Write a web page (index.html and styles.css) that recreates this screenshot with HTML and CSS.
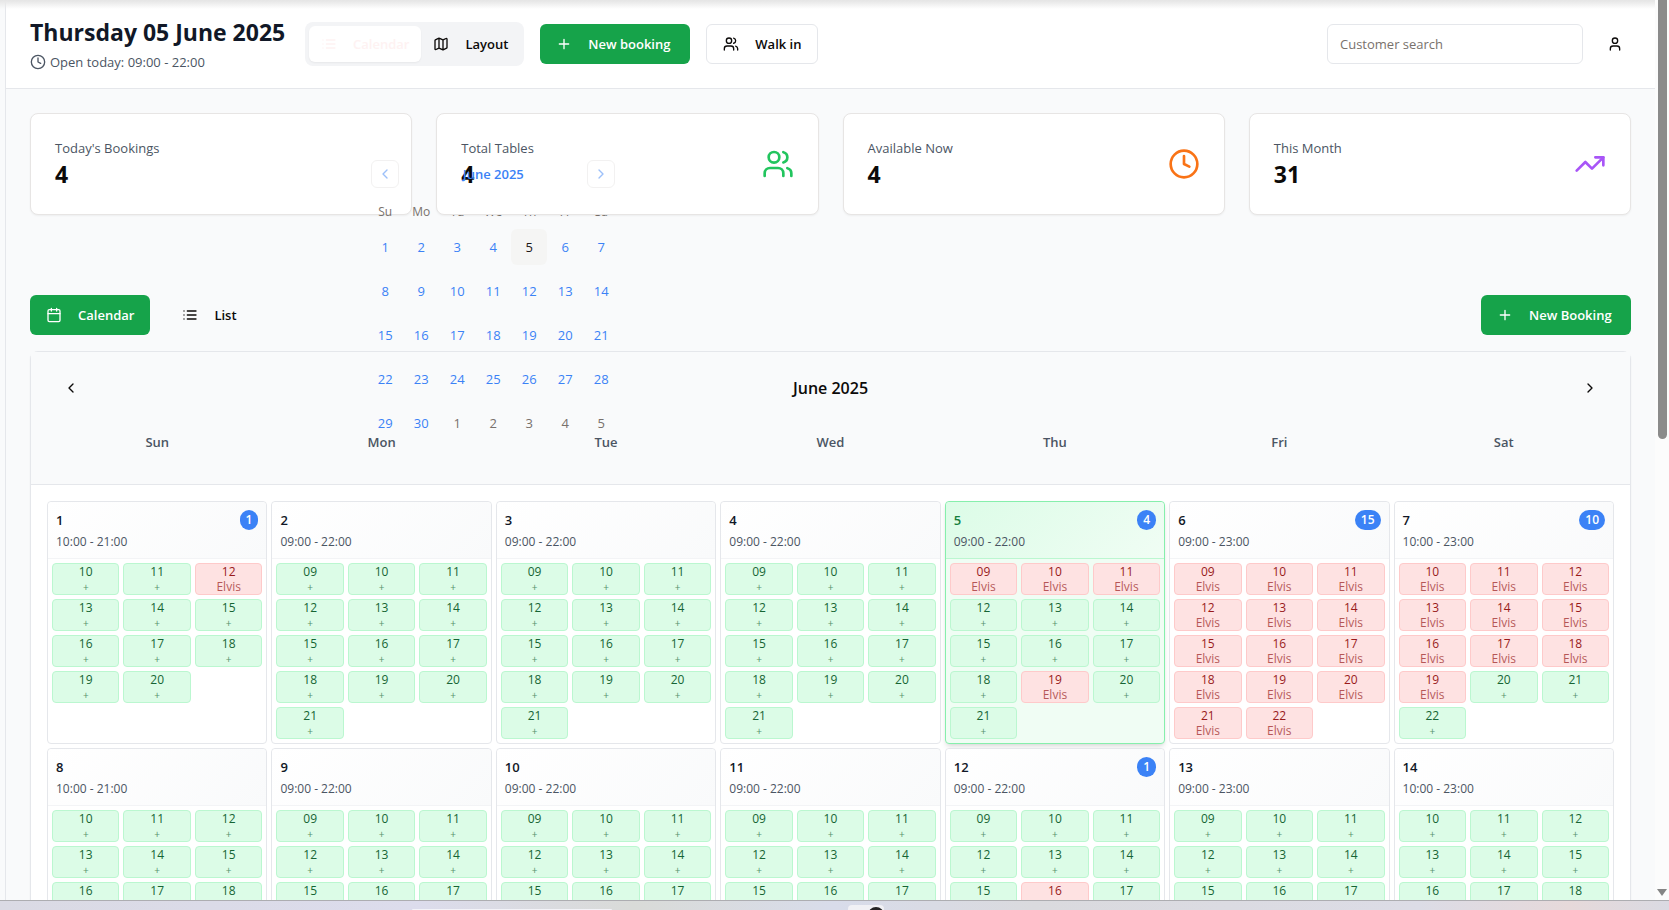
FILE: index.html
```html
<!DOCTYPE html>
<html lang="en">
<head>
<meta charset="utf-8">
<title>Bookings</title>
<link rel="stylesheet" href="styles.css">
</head>
<body>
<svg class="sprite" aria-hidden="true">
  <symbol id="clock" viewBox="0 0 24 24"><circle cx="12" cy="12" r="10"/><polyline points="12 6 12 12 16 14"/></symbol>
  <symbol id="list" viewBox="0 0 24 24"><path d="M3 12h.01M3 18h.01M3 6h.01M8 12h13M8 18h13M8 6h13"/></symbol>
  <symbol id="map" viewBox="0 0 24 24"><path d="M14.106 5.553a2 2 0 0 0 1.788 0l3.659-1.83A1 1 0 0 1 21 4.619v12.764a1 1 0 0 1-.553.894l-4.553 2.277a2 2 0 0 1-1.788 0l-4.212-2.106a2 2 0 0 0-1.788 0l-3.659 1.83A1 1 0 0 1 3 19.381V6.618a1 1 0 0 1 .553-.894l4.553-2.277a2 2 0 0 1 1.788 0zM15 5.764v15M9 3.236v15"/></symbol>
  <symbol id="plus" viewBox="0 0 24 24"><path d="M5 12h14M12 5v14"/></symbol>
  <symbol id="team" viewBox="0 0 24 24"><path d="M16 21v-2a4 4 0 0 0-4-4H6a4 4 0 0 0-4 4v2"/><circle cx="9" cy="7" r="4"/><path d="M22 21v-2a4 4 0 0 0-3-3.87M16 3.13a4 4 0 0 1 0 7.75"/></symbol>
  <symbol id="user" viewBox="0 0 24 24"><path d="M19 21v-2a4 4 0 0 0-4-4H9a4 4 0 0 0-4 4v2"/><circle cx="12" cy="7" r="4"/></symbol>
  <symbol id="trend" viewBox="0 0 24 24"><polyline points="22 7 13.5 15.5 8.5 10.5 2 17"/><polyline points="16 7 22 7 22 13"/></symbol>
  <symbol id="calendar" viewBox="0 0 24 24"><path d="M8 2v4M16 2v4M3 10h18"/><rect width="18" height="18" x="3" y="4" rx="2"/></symbol>
  <symbol id="left" viewBox="0 0 24 24"><path d="m15 18-6-6 6-6"/></symbol>
  <symbol id="right" viewBox="0 0 24 24"><path d="m9 18 6-6-6-6"/></symbol>
</svg>
<div class="screen">
  <div class="viewport">
    <div class="rail"></div>
    <div class="page">
      <header class="topbar">
        <div class="heading">
          <h1>Thursday 05 June 2025</h1>
          <p class="hours-today"><svg class="icon"><use href="#clock"/></svg>Open today: 09:00 - 22:00</p>
        </div>
        <div class="segmented">
          <button class="btn segment segment-active"><svg class="icon"><use href="#list"/></svg>Calendar</button>
          <button class="btn segment"><svg class="icon"><use href="#map"/></svg>Layout</button>
        </div>
        <button class="btn primary booking"><svg class="icon"><use href="#plus"/></svg>New booking</button>
        <button class="btn outline"><svg class="icon"><use href="#team"/></svg>Walk in</button>
        <input class="search" type="text" placeholder="Customer search" aria-label="Customer search">
        <button class="icon-btn" aria-label="Account"><svg class="icon"><use href="#user"/></svg></button>
      </header>
      <main class="content">
        <section class="stats">
          <div class="stat">
            <div><p class="stat-label">Today's Bookings</p><p class="stat-value">4</p></div>
            <div class="mini">
              <div class="mini-caption">
                <button class="mini-nav mini-prev" aria-label="Previous month"><svg class="icon"><use href="#left"/></svg></button>
                <span>June 2025</span>
                <button class="mini-nav mini-next" aria-label="Next month"><svg class="icon"><use href="#right"/></svg></button>
              </div>
              <table class="mini-table">
                <thead><tr><th>Su</th><th>Mo</th><th>Tu</th><th>We</th><th>Th</th><th>Fr</th><th>Sa</th></tr></thead>
                <tbody id="mini-days"></tbody>
              </table>
            </div>
          </div>
          <div class="stat">
            <div><p class="stat-label">Total Tables</p><p class="stat-value">4</p></div>
            <svg class="icon stat-icon green"><use href="#team"/></svg>
          </div>
          <div class="stat">
            <div><p class="stat-label">Available Now</p><p class="stat-value">4</p></div>
            <svg class="icon stat-icon orange"><use href="#clock"/></svg>
          </div>
          <div class="stat">
            <div><p class="stat-label">This Month</p><p class="stat-value">31</p></div>
            <svg class="icon stat-icon purple"><use href="#trend"/></svg>
          </div>
        </section>
        <div class="toolbar">
          <button class="btn primary"><svg class="icon"><use href="#calendar"/></svg>Calendar</button>
          <button class="btn ghost"><svg class="icon"><use href="#list"/></svg>List</button>
          <button class="btn primary booking push"><svg class="icon"><use href="#plus"/></svg>New Booking</button>
        </div>
        <section class="panel">
          <div class="panel-head">
            <div class="month-row">
              <button class="icon-btn month-nav" aria-label="Previous month"><svg class="icon"><use href="#left"/></svg></button>
              <h2>June 2025</h2>
              <button class="icon-btn month-nav" aria-label="Next month"><svg class="icon"><use href="#right"/></svg></button>
            </div>
            <div class="weekdays"><span>Sun</span><span>Mon</span><span>Tue</span><span>Wed</span><span>Thu</span><span>Fri</span><span>Sat</span></div>
          </div>
          <div class="days" id="days"></div>
        </section>
      </main>
    </div>
    <div class="scrollbar"><div class="thumb"></div><div class="arrow"></div></div>
    <div class="top-shadow"></div>
  </div>
  <div class="taskbar"><div class="task-panel"></div><div class="task-app"><div class="task-logo"></div></div></div>
</div>
<script src="app.js"></script>
</body>
</html>
```
FILE: styles.css
```css
* { box-sizing: border-box; }
body, h1, h2, p { margin: 0; }
body {
  font-family: "Open Sans", "Noto Sans", sans-serif;
  font-size: 13px;
  line-height: 20px;
  color: #0c0a09;
  background: #f9fafb;
}
button, input { font: inherit; color: inherit; }
button { border: 0; background: none; padding: 0; cursor: pointer; }
.sprite { display: none; }
.icon {
  width: 16px;
  height: 16px;
  flex: none;
  fill: none;
  stroke: currentColor;
  stroke-width: 2;
  stroke-linecap: round;
  stroke-linejoin: round;
}
.screen { display: flex; flex-direction: column; height: 100vh; overflow: hidden; }
.viewport { flex: 1; min-height: 0; display: flex; position: relative; overflow: hidden; }
.rail { width: 6px; flex: none; border-right: 1px solid #e5e7eb; }
.page { flex: 1; min-width: 0; overflow: hidden; }
.top-shadow {
  position: absolute;
  top: 0;
  left: 0;
  right: 14px;
  height: 9px;
  background: linear-gradient(#e5e5e5, #e9e9e9 20%, rgba(255, 255, 255, 0));
}

.topbar {
  display: flex;
  align-items: center;
  gap: 16px;
  padding: 16px 24px;
  background: #fff;
  border-bottom: 1px solid #e5e7eb;
}
.heading { display: flex; flex-direction: column; gap: 4px; min-width: 259px; white-space: nowrap; }
h1 { font-size: 23px; line-height: 32px; font-weight: 700; color: #111827; }
.hours-today { display: flex; align-items: center; gap: 4px; color: #4b5563; }
.btn {
  display: inline-flex;
  align-items: center;
  gap: 16px;
  height: 40px;
  padding: 0 16px;
  border-radius: 6px;
  font-weight: 600;
  white-space: nowrap;
}
.booking { min-width: 150px; }
.segmented { display: flex; padding: 4px; border-radius: 8px; background: #f3f4f6; }
.segment { height: 36px; padding: 0 12px; }
.segment-active { background: #fff; color: #fef2f2; box-shadow: 0 1px 2px rgba(0, 0, 0, 0.05); }
.primary { background: #16a34a; color: #fff; }
.outline { border: 1px solid #e5e7eb; background: #fff; }
.search {
  width: 256px;
  height: 40px;
  margin-left: auto;
  padding: 0 12px;
  border: 1px solid #e5e7eb;
  border-radius: 6px;
  background: #fff;
}
.search::placeholder { color: #78716c; opacity: 1; }
.icon-btn { display: inline-flex; align-items: center; justify-content: center; width: 32px; height: 32px; border-radius: 6px; }

.content { padding: 24px; }
.stats { display: grid; grid-template-columns: repeat(4, minmax(0, 1fr)); gap: 24px; }
.stat {
  display: flex;
  align-items: center;
  justify-content: space-between;
  padding: 24px;
  border: 1px solid #e7e5e4;
  border-radius: 8px;
  background: #fff;
  box-shadow: 0 1px 2px rgba(0, 0, 0, 0.05);
}
.stat-label { color: #4b5563; }
.stat-value { font-size: 23px; line-height: 32px; font-weight: 700; }
.stat-icon { width: 32px; height: 32px; }
.green { color: #22c55e; }
.orange { color: #f97316; }
.purple { color: #a855f7; }

.mini { width: 32px; height: 32px; padding: 12px; color: #3b82f6; }
.mini-caption {
  position: relative;
  display: flex;
  align-items: center;
  justify-content: center;
  width: 252px;
  padding-top: 4px;
  margin-bottom: 16px;
  font-weight: 600;
}
.mini-nav {
  position: absolute;
  top: 0;
  display: flex;
  align-items: center;
  justify-content: center;
  width: 28px;
  height: 28px;
  border: 1px solid #e7e5e4;
  border-radius: 6px;
  opacity: 0.5;
}
.mini-prev { left: 4px; }
.mini-next { right: 4px; }
.mini-table { display: block; width: 252px; }
.mini-table thead, .mini-table tbody { display: block; }
.mini-table tr { display: flex; margin-bottom: 8px; }
.mini-table thead tr { margin-bottom: 5px; }
.mini-table th { width: 36px; padding: 0; font-size: 12px; line-height: 24px; font-weight: 400; color: #78716c; text-align: center; }
.mini-table td { position: relative; width: 36px; padding: 0; }
.mini-day { display: block; width: 36px; height: 36px; border-radius: 6px; text-align: center; }
.mini-day.selected { background: #f5f5f4; color: #1c1917; }
.mini-day.outside { color: #78716c; }

.toolbar { display: flex; gap: 16px; margin-top: 80px; margin-bottom: 16px; }
.push { margin-left: auto; }

.panel { border: 1px solid #e5e7eb; border-radius: 8px; background: #fff; box-shadow: 0 1px 2px rgba(0, 0, 0, 0.05); }
.panel-head { padding: 24px 16px; background: #f9fafb; border-bottom: 1px solid #e5e7eb; }
.month-row { display: flex; align-items: center; justify-content: space-between; padding: 0 8px; margin-bottom: 24px; }
.month-nav { height: 24px; }
h2 { font-size: 16px; line-height: 24px; font-weight: 600; }
.weekdays { display: grid; grid-template-columns: repeat(7, minmax(0, 1fr)); gap: 4px; padding: 8px 0; text-align: center; font-weight: 600; color: #4b5563; }
.days { display: grid; grid-template-columns: repeat(7, minmax(0, 1fr)); gap: 4px; padding: 16px; }
.day { border: 1px solid #e5e7eb; border-radius: 4px; background: #fff; }
.day-head { padding: 8px; border-bottom: 1px solid #f3f4f6; border-radius: 4px 4px 0 0; background: linear-gradient(135deg, #fff, #f9fafb); }
.day-top { display: flex; align-items: center; justify-content: space-between; height: 20px; margin-bottom: 4px; font-size: 13px; font-weight: 600; color: #111827; }
.badge { padding: 0 6px; border-radius: 10px; background: #3b82f6; color: #fff; font-size: 12px; font-weight: 600; }
.day-hours { font-size: 12px; line-height: 16px; color: #4b5563; }
.slots { display: grid; grid-template-columns: repeat(3, minmax(0, 1fr)); gap: 4px; padding: 4px; }
.slot { display: flex; flex-direction: column; height: 32px; border: 1px solid #bbf7d0; border-radius: 4px; background: #dcfce7; color: #166534; font-size: 12px; line-height: 15px; font-weight: 500; text-align: center; }
.slot-note { font-size: 10px; line-height: 17px; opacity: 0.7; }
.booked { border-color: #fecaca; background: #fee2e2; color: #991b1b; }
.booked .slot-note { font-size: 12px; line-height: 15px; }
.today { border-color: #86efac; background: #f0fdf4; box-shadow: 0 4px 6px -1px rgba(0, 0, 0, 0.1), 0 2px 4px -2px rgba(0, 0, 0, 0.1); }
.today .day-head { border-color: #bbf7d0; background: linear-gradient(135deg, #dcfce7, #f0fdf4); }
.today .day-top { color: #15803d; }
.today .badge { color: #fff; }

.scrollbar { display: flex; flex-direction: column; align-items: center; justify-content: space-between; width: 14px; flex: none; padding-bottom: 4px; background: #fcfcfc; }
.thumb { width: 9px; height: 49%; border-radius: 0 0 5px 5px; background: #8b8b8b; }
.arrow { border: 5px solid transparent; border-top: 7px solid #858585; border-bottom: 0; }
.taskbar { display: flex; height: 10px; flex: none; border-top: 1px solid #adadb1; background: linear-gradient(90deg, #dadae4, #dcdcec 25%, #d9dbd8 38%, #d8dcea 50%, #dadade 62%, #dcdce6 85%, #e6d9da 94%, #dadae2); overflow: hidden; }
.task-panel { width: 200px; margin: 8px 0 0 412px; border-radius: 6px 6px 0 0; background: #f3f3f8; }
.task-app { width: 36px; margin: 4px 0 0 236px; border-radius: 4px 4px 0 0; background: #f1f1f5; overflow: hidden; }
.task-logo { width: 16px; height: 16px; margin: 2px auto 0 20px; border-radius: 8px; background: #242424; }
```
FILE: app.js
```js
const hour = n => String(n).padStart(2, '0');

// Opening hours by weekday, Sunday first: first slot, closing hour, number of slots.
const week = [[10, 21, 11], [9, 22, 13], [9, 22, 13], [9, 22, 13], [9, 22, 13], [9, 23, 14], [10, 23, 13]];
const range = (a, b) => Array.from({ length: b - a + 1 }, (_, i) => a + i);
const booked = { 1: [12], 5: [9, 10, 11, 19], 6: range(9, 22), 7: range(10, 19), 12: [16] };
const counts = { 1: 1, 5: 4, 6: 15, 7: 10, 12: 1 };

document.getElementById('days').innerHTML = range(1, 14).map(d => {
  const [open, close, total] = week[(d - 1) % 7];
  const slots = range(open, open + total - 1).map(h => {
    const taken = (booked[d] || []).includes(h);
    return `<button class="slot${taken ? ' booked' : ''}"><span>${hour(h)}</span><span class="slot-note">${taken ? 'Elvis' : '+'}</span></button>`;
  }).join('');
  const badge = counts[d] ? `<span class="badge">${counts[d]}</span>` : '';
  return `<article class="day${d === 5 ? ' today' : ''}">
    <div class="day-head"><div class="day-top"><span>${d}</span>${badge}</div>
    <p class="day-hours">${hour(open)}:00 - ${close}:00</p></div>
    <div class="slots">${slots}</div></article>`;
}).join('');

document.getElementById('mini-days').innerHTML = range(0, 4).map(r =>
  '<tr>' + range(1, 7).map(c => {
    const n = r * 7 + c;
    const state = n > 30 ? ' outside' : n === 5 ? ' selected' : '';
    return `<td><button class="mini-day${state}">${n > 30 ? n - 30 : n}</button></td>`;
  }).join('') + '</tr>').join('');
```
